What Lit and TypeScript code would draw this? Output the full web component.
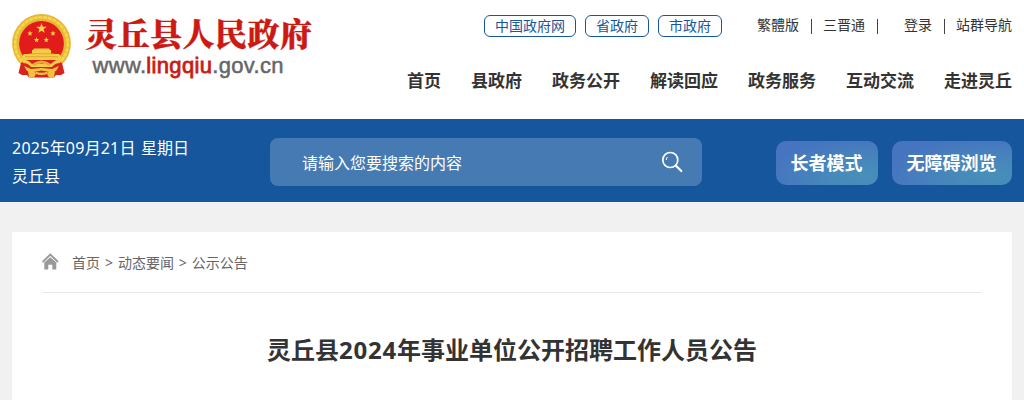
import { html, css, svg, LitElement } from "lit";
import { customElement, property } from "lit/decorators.js";

const STAR = "M0-10L2.4-3.2L9.5-3.1L3.8 1.2L5.9 8.1L0 4L-5.9 8.1L-3.8 1.2L-9.5-3.1L-2.4-3.2Z";

@customElement("site-logo")
export class SiteLogo extends LitElement {
  static styles = css`
    :host {
      display: block;
      width: 306px;
      height: 86px;
    }
    svg {
      display: block;
    }
    .name {
      font-family: "Noto Serif CJK SC", "Noto Sans CJK SC", serif;
      font-size: 32px;
      font-weight: 900;
      fill: #cb1a14;
      stroke: #cb1a14;
      stroke-width: 0.3px;
    }
    .domain {
      font-family: "Liberation Sans", Arial, sans-serif;
      font-size: 22px;
      fill: #666;
      stroke: #666;
      stroke-width: 0.5px;
    }
    .domain .red {
      fill: #cb1a14;
      stroke: #cb1a14;
      stroke-width: 0.8px;
    }
  `;

  star(x: number, y: number, scale: number) {
    return svg`<path d=${STAR} fill="#f8d648" transform="translate(${x} ${y}) scale(${scale})" />`;
  }

  render() {
    return html`
      <svg width="306" height="86" viewBox="0 -11 306 86">
        <circle cx="29.5" cy="32.5" r="29.4" fill="#e9b833" />
        <circle cx="29.5" cy="32.5" r="26.3" fill="none" stroke="#f5d552" stroke-width="2.6" stroke-dasharray="4 .8" />
        <circle cx="29.5" cy="32.5" r="22.4" fill="#e21c1b" />
        ${this.star(29.5, 17.5, 0.54)} ${this.star(18, 22.5, 0.29)} ${this.star(41, 22.5, 0.29)}
        ${this.star(24.5, 29, 0.29)} ${this.star(34.2, 29, 0.29)}
        <path
          d="M21 39L22 37.5H37L38 39H39V43H47L49 45V49H10V45L12 43H20V39Z"
          fill="#f5cc44"
        />
        <path d="M13 45.7H46M17 42.7H42" stroke="#d99b25" stroke-width=".7" />
        <path d="M9 52L6.5 62L10 64H15L17 66.5H42L44 64H49L52.5 62L50 52L45 49H14Z" fill="#d9211e" />
        <path d="M10 48Q17 49 20 53H39Q42 49 49 48L48 52Q43 52 40 56H19Q16 52 11 52Z" fill="#f5cc44" />
        <path d="M20 53Q29.5 46 39 53L37 55Q29.5 50 22 55Z" fill="#e8ae31" />
        <path d="M12 55L19 58L29.5 57L40 58L47 55L44 60L38 61L29.5 59.5L21 61L15 60Z" fill="#f3c640" />
        <path d="M16 60L22 60L24 63L22 66.5H17ZM43 60L37 60L35 63L37 66.5H42Z" fill="#efc13c" />
        <path d="M23 60.5Q29.5 63 36 60.5L35 63Q29.5 65 24 63Z" fill="#f3c640" />
        <text class="name" x="73" y="35" textLength="227">灵丘县人民政府</text>
        <text class="domain" x="80.5" y="61.5" textLength="191">www.<tspan class="red">lingqiu</tspan>.gov.cn</text>
      </svg>
    `;
  }
}

@customElement("site-header")
export class SiteHeader extends LitElement {
  static styles = css`
    :host {
      display: flex;
      justify-content: space-between;
      box-sizing: border-box;
      height: 119px;
      padding: 0 12px;
      background: #fff;
    }
    .right {
      display: flex;
      flex-direction: column;
      align-items: flex-end;
      padding-top: 15px;
    }
    .top {
      display: flex;
      align-items: center;
      height: 22px;
      font-size: 14px;
      line-height: 20px;
      color: #333;
    }
    .gov {
      display: flex;
      gap: 9px;
      margin-right: 35px;
    }
    .pill {
      padding: 0 10px;
      border: 1px solid #15569c;
      border-radius: 6px;
      color: #15569c;
    }
    .link {
      padding-bottom: 2px;
    }
    .bar {
      width: 1px;
      height: 15px;
      margin: 0 11px 0 12px;
      background: #444;
    }
    .bar.wide {
      margin-right: 26px;
    }
    nav {
      display: flex;
      gap: 30px;
      margin-top: 31px;
      font-size: 17px;
      font-weight: 700;
      line-height: 26px;
      color: #333;
    }
  `;

  render() {
    return html`
      <site-logo></site-logo>
      <div class="right">
        <div class="top">
          <div class="gov">
            ${["中国政府网", "省政府", "市政府"].map((name) => html`<span class="pill">${name}</span>`)}
          </div>
          <span class="link">繁體版</span><i class="bar"></i>
          <span class="link">三晋通</span><i class="bar wide"></i>
          <span class="link">登录</span><i class="bar"></i>
          <span class="link">站群导航</span>
        </div>
        <nav>
          ${["首页", "县政府", "政务公开", "解读回应", "政务服务", "互动交流", "走进灵丘"].map(
            (name) => html`<span>${name}</span>`
          )}
        </nav>
      </div>
    `;
  }
}

@customElement("search-bar")
export class SearchBar extends LitElement {
  static styles = css`
    :host {
      display: flex;
      box-sizing: border-box;
      height: 83px;
      padding: 0 12px;
      background: #15569c;
      color: #fff;
      font-size: 16px;
    }
    .date {
      width: 258px;
      padding-top: 15px;
      line-height: 28px;
    }
    .number {
      letter-spacing: 0.28px;
    }
    .week {
      margin-left: 1.4px;
    }
    .search {
      display: flex;
      align-items: center;
      justify-content: space-between;
      box-sizing: border-box;
      width: 432px;
      height: 48px;
      margin-top: 19px;
      padding: 0 19px 0 32px;
      border-radius: 8px;
      background: #467ab2;
    }
    .buttons {
      display: flex;
      gap: 14px;
      margin: 22px 0 0 auto;
    }
    .button {
      height: 44px;
      padding: 0 15.5px 0 14.5px;
      border-radius: 10px;
      background: radial-gradient(ellipse at 84% 80%, #4790b8 0%, #4686bc 35%, #4676bf 72%, #4673c0 100%);
      font-size: 18px;
      font-weight: 700;
      line-height: 45px;
    }
  `;

  @property() place = "";

  render() {
    return html`
      <div class="date">
        <div>
          <span class="number">2025</span>年<span class="number">09</span>月<span class="number">21</span>日
          <span class="week">星期日</span>
        </div>
        <div>${this.place}</div>
      </div>
      <div class="search">
        <span>请输入您要搜索的内容</span>
        <svg width="22" height="22" viewBox="0 0 22 22" fill="none" stroke="#fff">
          <circle cx="9.3" cy="9" r="7.5" stroke-width="1.7" />
          <path d="M14.8 14.5L20.3 20" stroke-width="2.2" stroke-linecap="round" />
          <path d="M5.3 9Q5.3 7 6.5 6" stroke-width="1" />
        </svg>
      </div>
      <div class="buttons">
        <div class="button">长者模式</div>
        <div class="button">无障碍浏览</div>
      </div>
    `;
  }
}

@customElement("app-root")
export class AppRoot extends LitElement {
  static styles = css`
    :host {
      display: block;
      height: 400px;
      overflow: hidden;
      background: #f1f1f1;
      font-family: "Noto Sans", "Noto Sans CJK SC", sans-serif;
    }
    .article {
      height: 168px;
      margin: 30px 12px 0;
      padding: 0 30px;
      background: #fff;
    }
    .crumbs {
      display: flex;
      align-items: center;
      height: 60px;
      border-bottom: 1px solid #e9e9e9;
      font-size: 14px;
      line-height: 20px;
      color: #666;
    }
    .crumbs svg {
      margin-right: 13px;
      padding-bottom: 1px;
    }
    .path {
      padding-top: 2px;
      word-spacing: 1.3px;
    }
    h1 {
      margin: 39px 0 0;
      font-size: 24px;
      line-height: 36px;
      text-align: center;
      color: #333;
    }
    .year {
      letter-spacing: 0.8px;
    }
  `;

  render() {
    return html`
      <site-header></site-header>
      <search-bar place="灵丘县"></search-bar>
      <div class="article">
        <div class="crumbs">
          <svg width="17" height="17" viewBox="0 0 17 17">
            <path d="M.6 9L8.3 1.5L16 9" fill="none" stroke="#999" stroke-width="1.8" />
            <path d="M2.3 9.6L8.3 4.2L14.3 9.6V16.5H10.3V11.7H6.3V16.5H2.3Z" fill="#999" />
          </svg>
          <span class="path">首页 &gt; 动态要闻 &gt; 公示公告</span>
        </div>
        <h1>灵丘县<span class="year">2024</span>年事业单位公开招聘工作人员公告</h1>
      </div>
    `;
  }
}
